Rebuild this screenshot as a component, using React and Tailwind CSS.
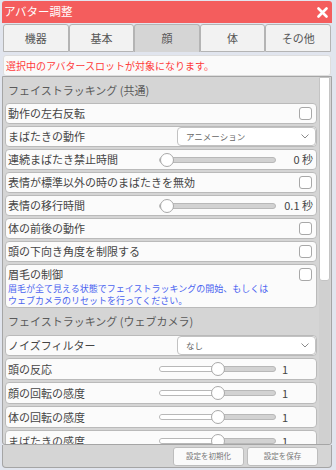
import React from 'react';

const tabs = ['機器', '基本', '顔', '体', 'その他'];

const Check = () => (
    <div className="ml-auto mr-[4px] h-[13px] w-[13px] shrink-0 rounded-[3px] border border-[#a8a8a8] bg-white"></div>
);

const Chevron = () => (
    <svg width="8" height="5" viewBox="0 0 8 5" className="ml-auto mr-[6px]">
        <path d="M0.5 0.5 L4 4 L7.5 0.5" fill="none" stroke="#8a8a8a" strokeWidth="1" />
    </svg>
);

const Slider = ({ pct }) => (
    <div className="relative ml-auto h-[6px] w-[117px] rounded-full border border-[#b8b8b8] bg-[#d2d2d2]">
        <div className="h-full rounded-full bg-white" style={{ width: `${pct}%` }}></div>
        <div
            className="absolute top-1/2 h-[14px] w-[14px] -translate-x-1/2 -translate-y-1/2 rounded-full border border-[#a9a9a9] bg-white"
            style={{ left: `${pct === 0 ? 6 : pct}%` }}
        ></div>
    </div>
);

const Row = ({ label, children, tall }) => (
    <div className={`flex ${tall ? 'h-[22px]' : 'h-[21px]'} shrink-0 items-center rounded-[4px] border border-[#bababa] bg-[#fbfbfb] pl-[2px]`}>
        <span className="whitespace-nowrap text-[11px] text-[#454545]">{label}</span>
        {children}
    </div>
);

const Select = ({ value }) => (
    <div className="ml-auto flex h-[19px] w-[139px] items-center rounded-[4px] border border-[#c2c2c2] bg-white pl-[8px]">
        <span className="text-[8.5px] text-[#666]">{value}</span>
        <Chevron />
    </div>
);

const SliderRow = ({ label, pct, value, unitRight, tall }) => (
    <Row label={label} tall={tall}>
        <Slider pct={pct} />
        {unitRight ? (
            <span className="w-[40px] pr-[3px] text-right text-[11px] text-[#454545]">{value}</span>
        ) : (
            <span className="w-[40px] pl-[6px] text-[11px] text-[#454545]">{value}</span>
        )}
    </Row>
);

const App = () => {
    return (
        <div className="h-[470px] w-[336px] overflow-hidden bg-[#e1e5ee] pt-[1px] pl-[2px]" style={{ fontFamily: '"Noto Sans CJK JP", "Noto Sans", sans-serif' }}>
            <div className="flex h-[467px] w-[330px] flex-col">
                {/* title bar */}
                <div className="flex h-[22px] shrink-0 items-center rounded-t-[3px] bg-[#f45d5d] pl-[2px] pr-[4px]">
                    <span className="text-[11.5px] text-white">アバター調整</span>
                    <svg width="11" height="11" viewBox="0 0 11 11" className="ml-auto">
                        <path d="M1.5 1.5 L9.5 9.5 M9.5 1.5 L1.5 9.5" stroke="white" strokeWidth="2.6" strokeLinecap="round" />
                    </svg>
                </div>

                {/* tabs */}
                <div className="mt-[1px] flex h-[28px] shrink-0 px-[1px]">
                    {tabs.map((t) => (
                        <div
                            key={t}
                            className={`flex flex-1 items-center justify-center rounded-t-[3px] border border-[#b4b4b4] text-[11px] text-[#555] ${t === '顔' ? 'border-b-0 bg-[#d5d5d5]' : 'bg-[#f2f2f2]'}`}
                        >
                            {t}
                        </div>
                    ))}
                </div>

                {/* notice */}
                <div className="mx-[1px] mt-[3px] flex h-[21px] shrink-0 items-center rounded-[3px] border border-[#dedede] bg-[#fafafa] pl-[2px]">
                    <span className="text-[10px] text-[#ff3a3a]">選択中のアバタースロットが対象になります。</span>
                </div>

                {/* content */}
                <div className="flex min-h-0 flex-1 rounded-b-[3px] border border-[#a5a5a5] bg-[#d5d5d5] pl-[2px] pr-[1px]">
                    <div className="flex w-[312px] flex-col overflow-hidden">
                        <div className="flex h-[26px] shrink-0 items-center pl-[3px] text-[11px] text-[#5a5a5a]">フェイストラッキング (共通)</div>
                        <div className="flex flex-col gap-[2px]">
                            <Row label="動作の左右反転"><Check /></Row>
                            <Row label="まばたきの動作"><Select value="アニメーション" /></Row>
                            <SliderRow label="連続まばたき禁止時間" pct={0} value="0 秒" unitRight />
                            <Row label="表情が標準以外の時のまばたきを無効"><Check /></Row>
                            <SliderRow label="表情の移行時間" pct={0} value="0.1 秒" unitRight />
                            <Row label="体の前後の動作"><Check /></Row>
                            <Row label="頭の下向き角度を制限する"><Check /></Row>
                            <div className="shrink-0 rounded-[4px] border border-[#bababa] bg-[#fbfbfb] pl-[2px]">
                                <div className="flex h-[18px] items-center">
                                    <span className="text-[11px] text-[#454545]">眉毛の制御</span>
                                    <Check />
                                </div>
                                <p className="text-[9px] leading-[12px] text-[#4a63f0]">
                                    眉毛が全て見える状態でフェイストラッキングの開始、もしくは
                                    <br />
                                    ウェブカメラのリセットを行ってください。
                                </p>
                            </div>
                        </div>
                        <div className="flex h-[27px] shrink-0 items-center pl-[3px] text-[11px] text-[#5a5a5a]">フェイストラッキング (ウェブカメラ)</div>
                        <div className="flex flex-col gap-[2px]">
                            <Row label="ノイズフィルター"><Select value="なし" /></Row>
                            <SliderRow label="頭の反応" pct={50} value="1" tall />
                            <SliderRow label="顔の回転の感度" pct={50} value="1" tall />
                            <SliderRow label="体の回転の感度" pct={50} value="1" tall />
                            <SliderRow label="まばたきの感度" pct={50} value="1" tall />
                        </div>
                    </div>
                    {/* scrollbar */}
                    <div className="ml-[2px] w-[11px] bg-[#d0d0d0]">
                        <div className="h-[204px] rounded-b-[3px] border border-[#c4c4c4] bg-white"></div>
                    </div>
                </div>

                {/* footer */}
                <div className="flex h-[23px] shrink-0 items-center justify-end gap-[3px] rounded-b-[4px] border border-t-0 border-[#a5a5a5] bg-[#d5d5d5] pr-[13px]">
                    <button className="flex h-[19px] w-[71px] items-center justify-center rounded-[3px] border border-[#bdbdbd] bg-[#fafafa] text-[7.5px] text-[#777]">設定を初期化</button>
                    <button className="flex h-[19px] w-[71px] items-center justify-center rounded-[3px] border border-[#bdbdbd] bg-[#fafafa] text-[7.5px] text-[#777]">設定を保存</button>
                </div>
            </div>
        </div>
    );
};

export default App;
